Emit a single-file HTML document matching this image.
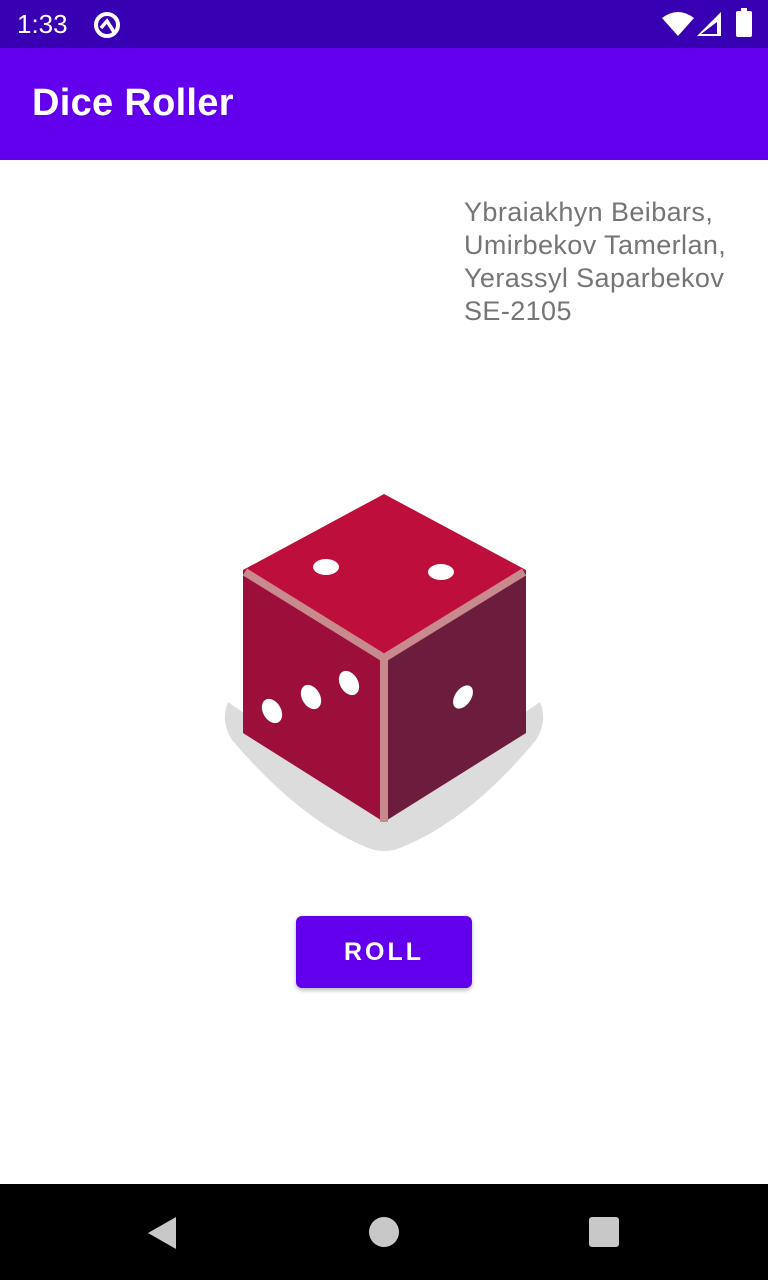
<!DOCTYPE html>
<html><head><meta charset="utf-8"><style>
html,body{margin:0;padding:0;width:768px;height:1280px;background:#fff;overflow:hidden;font-family:"Liberation Sans",sans-serif;position:relative}
.sb{position:absolute;top:0;left:0;width:768px;height:48px;background:#3700b3;color:#fff}
.ab{position:absolute;top:48px;left:0;width:768px;height:112px;background:#6200ee;color:#fff}
.ab span{position:absolute;left:32px;top:34px;font-size:38px;font-weight:bold;letter-spacing:0.3px}
.names{position:absolute;left:464px;top:196px;font-size:27px;line-height:33px;color:#757575;letter-spacing:0.4px;white-space:nowrap}
.btn{position:absolute;left:296px;top:916px;width:176px;height:72px;background:#6200ee;border-radius:6px;box-shadow:0 2px 4px rgba(0,0,0,0.3);color:#fff;font-size:25px;font-weight:bold;letter-spacing:3px;text-align:center;line-height:72px}
.nav{position:absolute;top:1184px;left:0;width:768px;height:96px;background:#000}
</style></head><body>
<div class="sb">
<span style="position:absolute;left:17px;top:9px;font-size:26px">1:33</span>
<svg style="position:absolute;left:92px;top:10px" width="30" height="30" viewBox="0 0 30 30"><circle cx="15" cy="15" r="11" fill="none" stroke="#fff" stroke-width="4"/><path d="M9 18 L15 11 L22 22" fill="none" stroke="#fff" stroke-width="3.5"/></svg>
<svg style="position:absolute;left:662px;top:12px" width="32" height="24" viewBox="0 0 32 24"><path d="M0 6 Q16 -6 32 6 L16 24 Z" fill="#fff"/></svg>
<svg style="position:absolute;left:697px;top:12px" width="26" height="24" viewBox="0 0 26 24"><path d="M24 0 L24 24 L0 24 Z M20 10 L4 22 L20 22 Z" fill="#fff" fill-rule="evenodd"/></svg>
<div style="position:absolute;left:736px;top:11px;width:16px;height:26px;background:#fff;border-radius:2px"></div>
<div style="position:absolute;left:741px;top:8px;width:6px;height:4px;background:#fff"></div>
</div>
<div class="ab"><span>Dice Roller</span></div>
<div class="names">Ybraiakhyn Beibars,<br>Umirbekov Tamerlan,<br>Yerassyl Saparbekov<br>SE-2105</div>
<svg style="position:absolute;left:0;top:0" width="768" height="1280">
<path d="M228 702 Q220 722 232 740 Q300 820 368 848 Q384 854 400 848 Q470 820 536 740 Q548 722 540 702 L384 810 Z" fill="#dcdcdc"/>
<polygon points="243,570 384,658 384,822 243,733" fill="#9b0f3a"/>
<polygon points="526,570 384,658 384,822 526,733" fill="#6c1d3e"/>
<polygon points="384,494 526,570 384,658 243,570" fill="#bd0e3c"/>
<polyline points="245,572 384,658 524,572" fill="none" stroke="#c98a8e" stroke-width="8"/>
<line x1="384" y1="658" x2="384" y2="822" stroke="#c98a8e" stroke-width="8"/>
<ellipse cx="326" cy="567" rx="13" ry="8" fill="#fff"/>
<ellipse cx="441" cy="572" rx="13" ry="8" fill="#fff"/>
<ellipse cx="272" cy="711" rx="9" ry="13" transform="rotate(-30 272 711)" fill="#fff"/>
<ellipse cx="311" cy="697" rx="9" ry="13" transform="rotate(-30 311 697)" fill="#fff"/>
<ellipse cx="349" cy="683" rx="9" ry="13" transform="rotate(-30 349 683)" fill="#fff"/>
<ellipse cx="463" cy="697" rx="8" ry="13" transform="rotate(35 463 697)" fill="#fff"/>
</svg>
<div class="btn">ROLL</div>
<div class="nav">
<svg style="position:absolute;left:146px;top:32px" width="32" height="34" viewBox="0 0 32 34"><polygon points="30,1 30,33 2,17" fill="#c8c8c8"/></svg>
<div style="position:absolute;left:369px;top:33px;width:30px;height:30px;border-radius:50%;background:#c8c8c8"></div>
<div style="position:absolute;left:589px;top:33px;width:30px;height:30px;border-radius:3px;background:#c8c8c8"></div>
</div>
</body></html>
